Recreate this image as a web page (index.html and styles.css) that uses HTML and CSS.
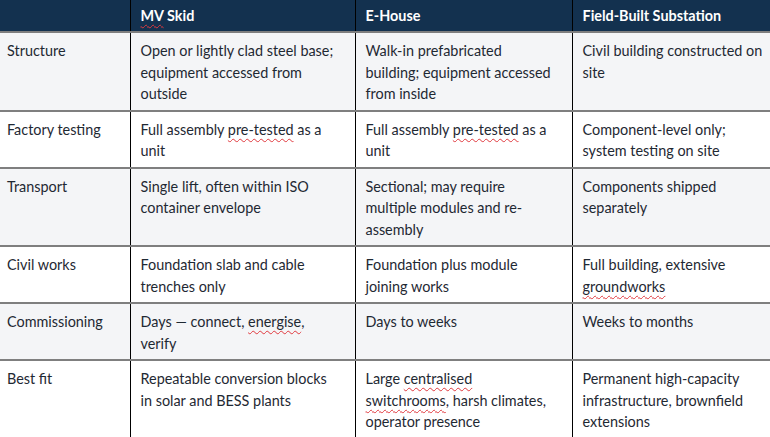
FILE: index.html
```html
<!DOCTYPE html>
<html lang="en">
<head>
<meta charset="utf-8">
<title>Substation comparison</title>
<link rel="stylesheet" href="styles.css">
</head>
<body>
<table class="cmp">
  <colgroup>
    <col class="c1"><col class="c2"><col class="c3"><col class="c4">
  </colgroup>
  <thead>
    <tr>
      <th></th>
      <th><span class="sp">MV</span> Skid</th>
      <th>E-House</th>
      <th>Field-Built Substation</th>
    </tr>
  </thead>
  <tbody>
    <tr class="alt">
      <td>Structure</td>
      <td>Open or lightly clad steel base;<br>equipment accessed from<br>outside</td>
      <td>Walk-in prefabricated<br>building; equipment accessed<br>from inside</td>
      <td>Civil building constructed on<br>site</td>
    </tr>
    <tr>
      <td>Factory testing</td>
      <td>Full assembly <span class="sp">pre-tested</span> as a<br>unit</td>
      <td>Full assembly <span class="sp">pre-tested</span> as a<br>unit</td>
      <td>Component-level only;<br>system testing on site</td>
    </tr>
    <tr class="alt">
      <td>Transport</td>
      <td>Single lift, often within ISO<br>container envelope</td>
      <td>Sectional; may require<br>multiple modules and re-<br>assembly</td>
      <td>Components shipped<br>separately</td>
    </tr>
    <tr>
      <td>Civil works</td>
      <td>Foundation slab and cable<br>trenches only</td>
      <td>Foundation plus module<br>joining works</td>
      <td>Full building, extensive<br><span class="sp">groundworks</span></td>
    </tr>
    <tr class="alt">
      <td>Commissioning</td>
      <td>Days — connect, <span class="sp">energise</span>,<br>verify</td>
      <td>Days to weeks</td>
      <td>Weeks to months</td>
    </tr>
    <tr>
      <td>Best fit</td>
      <td>Repeatable conversion blocks<br>in solar and BESS plants</td>
      <td>Large <span class="sp">centralised</span><br><span class="sp">switchrooms</span>, harsh climates,<br>operator presence</td>
      <td>Permanent high-capacity<br>infrastructure, brownfield<br>extensions</td>
    </tr>
  </tbody>
</table>
</body>
</html>
```
FILE: styles.css
```css
html, body {
  margin: 0;
  padding: 0;
  background: #ffffff;
}
body {
  font-family: "Lato", "Liberation Sans", sans-serif;
  font-size: 14.4px;
  color: #1f2933;
}
.cmp {
  border-collapse: collapse;
  table-layout: fixed;
  width: 800px;
}
.c1 { width: 130px; }
.c2 { width: 225px; }
.c3 { width: 217px; }
.c4 { width: 228px; }
.cmp th {
  background: #13314f;
  color: #ffffff;
  font-weight: 700;
  text-align: left;
  height: 32px;
  padding: 0 10px;
  border-left: 1px solid #000000;
  border-bottom: 2px solid #7f7f7f;
  box-sizing: border-box;
  vertical-align: middle;
  white-space: nowrap;
}
.cmp td {
  padding: 7px 10px 5px 10px;
  line-height: 21.5px;
  vertical-align: top;
  border-left: 1px solid #000000;
  border-bottom: 2px solid #7f7f7f;
  white-space: nowrap;
}
.cmp th:first-child,
.cmp td:first-child {
  border-left: none;
  padding-left: 7px;
}
.cmp tr.alt td {
  background: #f4f5f7;
}
.sp {
  text-decoration: underline wavy #e0393e;
  text-decoration-thickness: 1px;
  text-underline-offset: 3px;
  text-decoration-skip-ink: none;
}
```
